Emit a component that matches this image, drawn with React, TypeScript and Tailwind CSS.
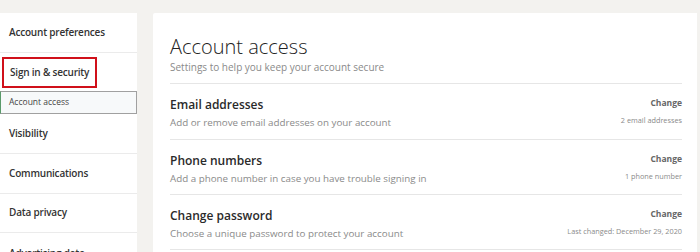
import React from "react";

const font = { fontFamily: '"Open Sans", "Noto Sans", sans-serif' };

function SideItem({ label, last }: { label: string; last?: boolean }) {
  return (
    <div className={`h-[40px] flex items-center pl-[9px] text-[10px] font-semibold tracking-[-0.2px] text-[#333] ${last ? "" : "border-b border-[#ebebeb]"}`}>
      {label}
    </div>
  );
}

function Row({ title, desc, sub, h }: { title: string; desc: string; sub: string; h: string }) {
  return (
    <div className={`${h} border-b border-[#e6e6e6] flex items-start justify-between pt-[13px]`}>
      <div className="flex flex-col">
        <div className="text-[12px] font-semibold text-[#2a2a2a] leading-[16px]">{title}</div>
        <div className="text-[9.8px] text-[#8a8a8a] leading-[14px] mt-[3px]">{desc}</div>
      </div>
      <div className="flex flex-col items-end -mt-[1px]">
        <div className="text-[8.5px] font-bold text-[#666] leading-[13px]">Change</div>
        <div className="text-[7.3px] text-[#8a8a8a] leading-[12px] mt-[5px]">{sub}</div>
      </div>
    </div>
  );
}

export default function App() {
  return (
    <div className="w-[700px] h-[252px] bg-[#f3f2ef] overflow-hidden flex gap-[16px] pt-[13px]" style={font}>
      <div className="w-[137px] bg-white flex flex-col shrink-0 h-[260px]">
        <SideItem label="Account preferences" />
        <div className="h-[39px] flex items-center pl-[2px]">
          <div className="border-2 border-[#d0101a] h-[31px] w-[95px] flex items-center pl-[6px] text-[10px] font-semibold tracking-[-0.2px] text-[#333] whitespace-nowrap">
            Sign in &amp; security
          </div>
        </div>
        <div className="h-[23px] bg-[#f7f9fa] border border-[#a0a0a0] border-l-[#5a9a6a] flex items-center pl-[8px] text-[8.5px] text-[#444]">
          Account access
        </div>
        <SideItem label="Visibility" />
        <SideItem label="Communications" />
        <SideItem label="Data privacy" />
        <SideItem label="Advertising data" last />
      </div>
      <div className="w-[544px] bg-white shrink-0 h-[260px] pl-[17px] pr-[15px] rounded-tl-[2px]">
        <div className="h-[71px] border-b border-[#e6e6e6] pt-[22px]">
          <div className="text-[20px] font-light text-[#222] leading-[24px]">Account access</div>
          <div className="text-[10px] text-[#8a8a8a] leading-[14px] mt-[1px]">Settings to help you keep your account secure</div>
        </div>
        <Row h="h-[56px]" title="Email addresses" desc="Add or remove email addresses on your account" sub="2 email addresses" />
        <Row h="h-[55px]" title="Phone numbers" desc="Add a phone number in case you have trouble signing in" sub="1 phone number" />
        <Row h="h-[55px]" title="Change password" desc="Choose a unique password to protect your account" sub="Last changed: December 29, 2020" />
      </div>
    </div>
  );
}
